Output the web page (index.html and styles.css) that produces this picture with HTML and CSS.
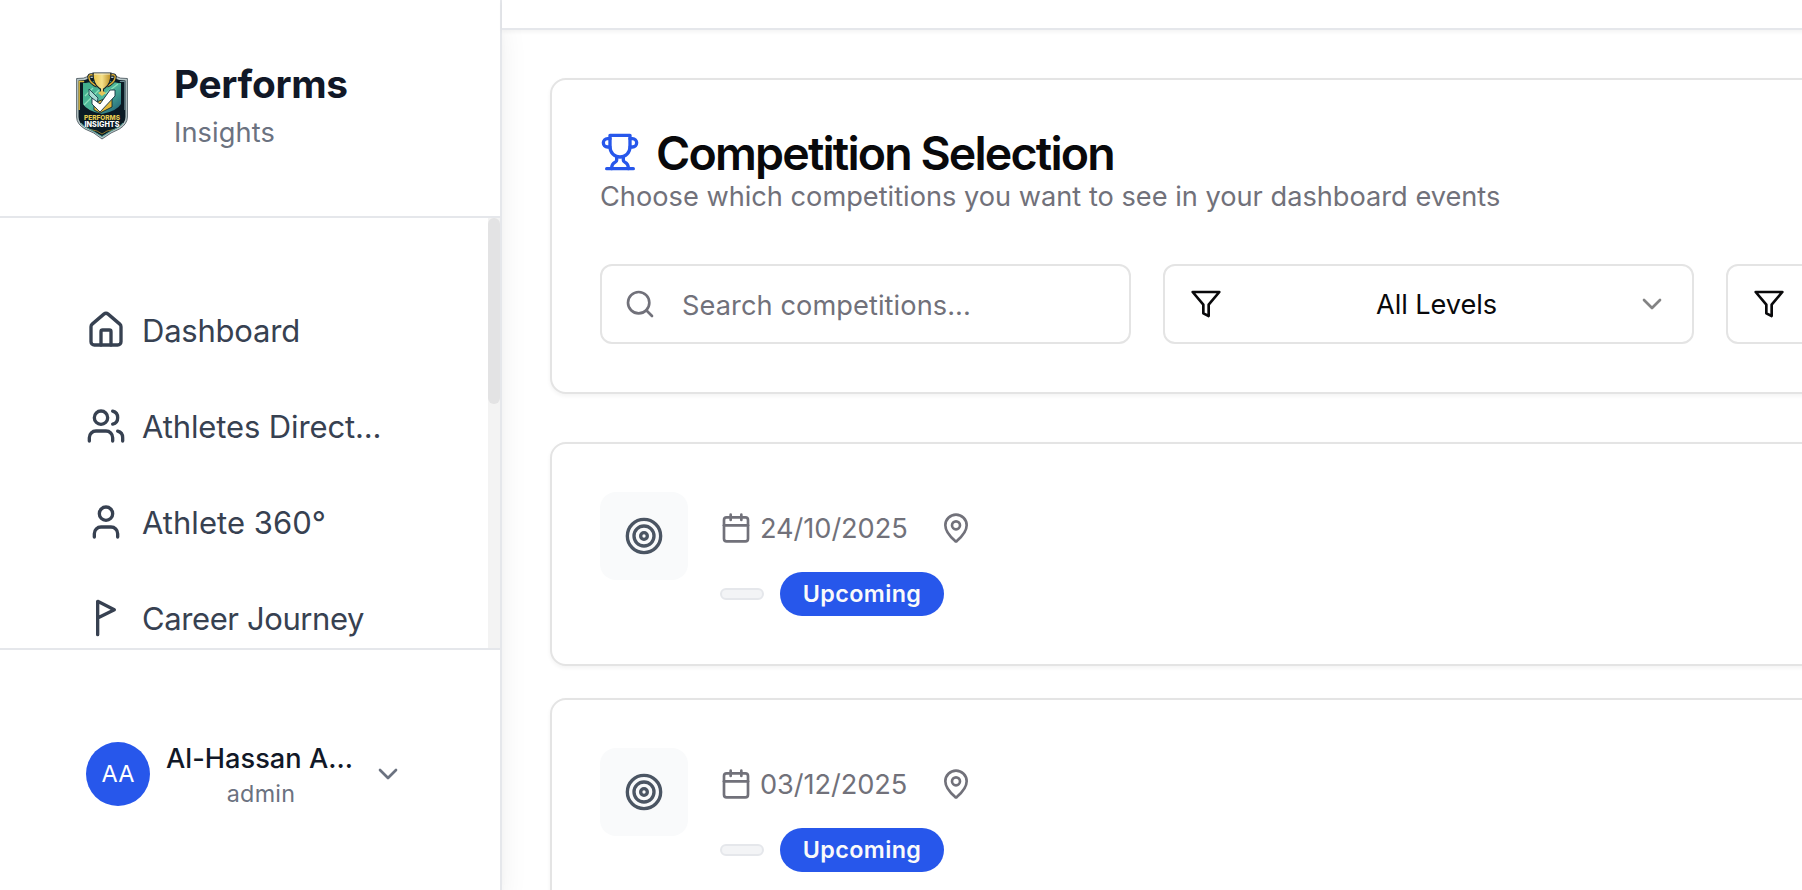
FILE: index.html
```html
<!DOCTYPE html>
<html lang="en">
<head>
<meta charset="utf-8">
<title>Performs Insights</title>
<link rel="stylesheet" href="styles.css">
</head>
<body>
<svg class="sprite" aria-hidden="true">
  <symbol id="i-target" viewBox="0 0 24 24"><circle cx="12" cy="12" r="10"/><circle cx="12" cy="12" r="6"/><circle cx="12" cy="12" r="2"/></symbol>
  <symbol id="i-calendar" viewBox="0 0 24 24"><path d="M8 2v4M16 2v4"/><rect x="3" y="4" width="18" height="18" rx="2"/><path d="M3 10h18"/></symbol>
  <symbol id="i-pin" viewBox="0 0 24 24"><path d="M20 10c0 4.993-5.539 10.193-7.399 11.799a1 1 0 0 1-1.202 0C9.539 20.193 4 14.993 4 10a8 8 0 0 1 16 0"/><circle cx="12" cy="10" r="3"/></symbol>
  <symbol id="i-filter" viewBox="0 0 24 24"><polygon points="22 3 2 3 10 12.46 10 19 14 21 14 12.46 22 3"/></symbol>
  <symbol id="i-chevron" viewBox="0 0 24 24"><path d="m6 9 6 6 6-6"/></symbol>
</svg>
<div class="app">
  <aside class="sidebar">
    <div class="brand">
      <svg class="brand-logo" viewBox="0 0 52 68">
        <defs>
          <linearGradient id="teal" x1="0" y1="0" x2="1" y2="1"><stop offset="0" stop-color="#3fae8a"/><stop offset=".5" stop-color="#4fb79a"/><stop offset="1" stop-color="#1d5876"/></linearGradient>
          <linearGradient id="gold" x1="0" y1="0" x2="1" y2="0"><stop offset="0" stop-color="#e9c64a"/><stop offset=".5" stop-color="#f5e08a"/><stop offset="1" stop-color="#b98a1d"/></linearGradient>
        </defs>
        <path d="M.6 6.5Q8 7 13 4h26q5 3 12.400 2.500V45q0 7-8 12-8 3-17.400 10Q18 60 9 57 .6 52 .6 45z" fill="#b9c8c9" stroke="#3c4a52" stroke-width=".8"/>
        <path d="M2.500 8.500q7 0 11-2.500h25q4 2.500 11 2.500V45q0 6-7 10.500-8 3-16.500 9-8.500-6-16.500-9-7-4.500-7-10.500z" fill="#0a1a24"/>
        <path d="M3.200 38V9.500h5" fill="none" stroke="#d9b943" stroke-width="1.400"/>
        <path d="M48.800 38V9.500h-5" fill="none" stroke="#6d8d94" stroke-width="1"/>
        <path d="M7 11q6 0 9-2h20q3 2 9 2v21q-4 7-19 10Q11 39 7 32z" fill="url(#teal)"/>
        <path d="m8 33 15-15M29 22l13-10M9 24l8-8" stroke="#8de0bb" stroke-width="1.300"/>
        <path d="M17 3q-5-1-4 3 1 5 8 8M35 3q5-1 4 3-1 5-8 8" fill="none" stroke="#0a1a24" stroke-width="3.200"/>
        <path d="M17 3q-5-1-4 3 1 5 8 8M35 3q5-1 4 3-1 5-8 8" fill="none" stroke="#d7ac35" stroke-width="1.400"/>
        <path d="M17 1h18q0 11-6 15l-1.500 1v4h-3v-4L23 16q-6-4-6-15z" fill="url(#gold)" stroke="#14222b" stroke-width="1.100"/>
        <path d="M18 2h16" stroke="#f6efcf" stroke-width="1"/>
        <path d="m22 21 4-2.500 4 2.500-4 3z" fill="#e5c75a"/>
        <path d="M18 31v7l6 3 12-6V24z" fill="#e2b83c" stroke="#0a1a24" stroke-width=".8"/>
        <path d="m13 17 9 9-1 5-8-8z" fill="#a8dcd2" stroke="#123040" stroke-width=".8"/>
        <path d="m16 26 8 6 10-14h5v6L24 40l-8-8z" fill="#fff" stroke="#123040" stroke-width=".9"/>
        <path d="m14 57.500 7 1.500 5 3 5-3 7-1.500" fill="none" stroke="#98812f" stroke-width=".9"/>
        <path d="M5 51q3 4 11 7.500l10 6 10-6q8-3.500 11-7.500" fill="none" stroke="#4f9a92" stroke-width="1"/>
        <text x="8" y="48.300" class="logo-text" fill="#e5ca50" font-size="6.800" textLength="36" lengthAdjust="spacingAndGlyphs">PERFORMS</text>
        <text x="8.500" y="55.300" class="logo-text" fill="#fff" font-size="7.200" textLength="35" lengthAdjust="spacingAndGlyphs">INSIGHTS</text>
      </svg>
      <div class="brand-copy">
        <div class="brand-name">Performs</div>
        <div class="brand-sub">Insights</div>
      </div>
    </div>
    <div class="nav-wrap">
      <nav class="nav">
        <a class="nav-item"><svg class="icon icon-lg" viewBox="0 0 24 24"><path d="M15 21v-8a1 1 0 0 0-1-1h-4a1 1 0 0 0-1 1v8"/><path d="M3 10a2 2 0 0 1 .709-1.528l7-5.999a2 2 0 0 1 2.582 0l7 5.999A2 2 0 0 1 21 10v9a2 2 0 0 1-2 2H5a2 2 0 0 1-2-2z"/></svg><span class="nav-label dashboard">Dashboard</span></a>
        <a class="nav-item"><svg class="icon icon-lg" viewBox="0 0 24 24"><path d="M16 21v-2a4 4 0 0 0-4-4H6a4 4 0 0 0-4 4v2"/><circle cx="9" cy="7" r="4"/><path d="M22 21v-2a4 4 0 0 0-3-3.870"/><path d="M16 3.130a4 4 0 0 1 0 7.750"/></svg><span class="nav-label directory">Athletes Direct...</span></a>
        <a class="nav-item"><svg class="icon icon-lg" viewBox="0 0 24 24"><path d="M19 21v-2a4 4 0 0 0-4-4H9a4 4 0 0 0-4 4v2"/><circle cx="12" cy="7" r="4"/></svg><span class="nav-label athlete">Athlete 360°</span></a>
        <a class="nav-item"><svg class="icon icon-lg" viewBox="0 0 24 24"><path d="M7 22V2l10 5-10 5"/></svg><span class="nav-label career">Career Journey</span></a>
      </nav>
      <div class="scrollbar"><div class="scroll-thumb"></div></div>
    </div>
    <div class="account">
      <div class="avatar">AA</div>
      <div class="account-copy">
        <div class="account-name">Al-Hassan A...</div>
        <div class="account-role">admin</div>
      </div>
      <svg class="icon icon-md account-chevron"><use href="#i-chevron"/></svg>
    </div>
  </aside>
  <div class="page">
    <header class="topbar"></header>
    <main class="content">
      <section class="card filters">
        <div class="title-row">
          <svg class="icon icon-lg trophy" viewBox="0 0 24 24"><path d="M6 9H4.500a2.500 2.500 0 0 1 0-5H6"/><path d="M18 9h1.500a2.500 2.500 0 0 0 0-5H18"/><path d="M4 22h16"/><path d="M10 14.660V17c0 .55-.47.98-.97 1.210C7.850 18.750 7 20.240 7 22"/><path d="M14 14.660V17c0 .55.47.98.97 1.210C16.150 18.750 17 20.240 17 22"/><path d="M18 2H6v7a6 6 0 0 0 12 0V2Z"/></svg>
          <h1 class="title">Competition Selection</h1>
        </div>
        <p class="subtitle">Choose which competitions you want to see in your dashboard events</p>
        <div class="controls">
          <div class="field search"><svg class="icon icon-md" viewBox="0 0 24 24"><circle cx="11" cy="11" r="8"/><path d="m21 21-4.300-4.300"/></svg><span class="placeholder">Search competitions...</span></div>
          <div class="field select"><svg class="icon icon-md filter-icon"><use href="#i-filter"/></svg><span class="select-value">All Levels</span><svg class="icon icon-md faded"><use href="#i-chevron"/></svg></div>
          <div class="field select"><svg class="icon icon-md filter-icon"><use href="#i-filter"/></svg></div>
        </div>
      </section>
      <div class="events">
        <article class="card event">
          <div class="tile"><svg class="icon icon-lg"><use href="#i-target"/></svg></div>
          <div class="event-info">
            <div class="meta"><span class="meta-item"><svg class="icon icon-md"><use href="#i-calendar"/></svg><span class="date">24/10/2025</span></span><svg class="icon icon-md"><use href="#i-pin"/></svg></div>
            <div class="badges"><span class="badge-empty"></span><span class="badge">Upcoming</span></div>
          </div>
        </article>
        <article class="card event">
          <div class="tile"><svg class="icon icon-lg"><use href="#i-target"/></svg></div>
          <div class="event-info">
            <div class="meta"><span class="meta-item"><svg class="icon icon-md"><use href="#i-calendar"/></svg><span class="date">03/12/2025</span></span><svg class="icon icon-md"><use href="#i-pin"/></svg></div>
            <div class="badges"><span class="badge-empty"></span><span class="badge">Upcoming</span></div>
          </div>
        </article>
      </div>
    </main>
  </div>
</div>
</body>
</html>
```
FILE: styles.css
```css
* { box-sizing: border-box; }
html, body { margin: 0; height: 100%; overflow: hidden; }
body { font-family: Inter, "Liberation Sans", sans-serif; background: #fff; color: #09090b; white-space: nowrap; }
.sprite { display: none; }
.app { display: flex; height: 890px; overflow: hidden; }

.icon { display: block; flex: none; fill: none; stroke: currentColor; stroke-width: 2; stroke-linecap: round; stroke-linejoin: round; }
.icon-md { width: 32px; height: 32px; }
.icon-lg { width: 40px; height: 40px; }

.sidebar { flex: none; width: 502px; display: flex; flex-direction: column; background: #fff; border-right: 2px solid #e5e7eb; position: relative; z-index: 1; box-shadow: 0 20px 30px -6px rgba(0,0,0,.1), 0 8px 12px -8px rgba(0,0,0,.1); }
.brand { height: 218px; flex: none; display: flex; align-items: flex-start; gap: 46px; padding: 56px 0 0 76px; border-bottom: 2px solid #e5e7eb; }
.brand-logo { width: 52px; height: 68px; margin-top: 16px; }
.logo-text { font-weight: 800; }
.brand-name { font-size: 38.8px; line-height: 56px; font-weight: 700; color: #111827; letter-spacing: -.3px; }
.brand-sub { padding-top: 1px; font-size: 27.2px; line-height: 40px; color: #6b7280; letter-spacing: .12px; }
.nav-wrap { flex: 1; min-height: 0; display: flex; justify-content: space-between; overflow: hidden; }
.nav { padding: 64px 0 0 86px; }
.nav-item { display: flex; align-items: center; gap: 16px; height: 96px; font-size: 31px; line-height: 48px; color: #374151; }
.nav-label { padding-top: 2px; }
.dashboard { letter-spacing: -.22px; }
.directory { letter-spacing: -.12px; }
.athlete { letter-spacing: .04px; }
.career { letter-spacing: -.4px; }
.scrollbar { width: 12px; background: #f3f3f3; }
.scroll-thumb { height: 186px; border-radius: 6px; background: #e3e3e4; }
.account { flex: none; height: 242px; display: flex; align-items: flex-start; padding: 92px 0 0 86px; border-top: 2px solid #e5e7eb; }
.avatar { width: 64px; height: 64px; border-radius: 50%; background: #2757eb; color: #fff; font-size: 23.5px; line-height: 64px; text-align: center; }
.account-copy { width: 190px; margin: -3px 0 0 16px; }
.account-name { font-size: 27.2px; line-height: 40px; font-weight: 500; color: #111827; letter-spacing: .02px; }
.account-role { font-size: 23.3px; line-height: 30px; color: #6b7280; text-align: center; letter-spacing: .25px; }
.account-chevron { margin: 16px 0 0 16px; color: #6b7280; }

.page { flex: none; width: 1853px; }
.topbar { height: 30px; border-bottom: 2px solid #e5e7eb; background: #fff; position: relative; z-index: 2; box-shadow: 0 2px 4px rgba(0,0,0,.05); }
.content { display: flex; flex-direction: column; gap: 48px; padding: 48px; }
.card { border: 2px solid #e4e4e4; border-radius: 16px; background: #fff; box-shadow: 0 2px 4px rgba(0,0,0,.05); }
.filters { height: 316px; padding: 48px; }
.title-row { display: flex; align-items: center; gap: 16px; height: 48px; }
.trophy { color: #2757eb; }
.title { margin: 0; padding-top: 1px; font-size: 46.5px; line-height: 48px; font-weight: 600; letter-spacing: -1.81px; word-spacing: -.5px; }
.subtitle { margin: 0; font-size: 27.2px; line-height: 41px; height: 40px; color: #71717a; letter-spacing: 0; }
.controls { display: grid; grid-template-columns: repeat(3, 1fr); gap: 32px; margin-top: 48px; }
.field { height: 80px; border: 2px solid #e4e4e4; border-radius: 12px; display: flex; align-items: center; padding: 0 24px; font-size: 27.2px; line-height: 40px; }
.search { gap: 26px; padding-left: 22px; color: #71717a; }
.placeholder { padding-top: 3px; letter-spacing: .08px; }
.select { justify-content: space-between; padding-left: 25px; }
.select-value { padding-top: 1px; letter-spacing: -.1px; }
.filter-icon { margin-right: 15px; }
.faded { opacity: .5; }
.events { display: flex; flex-direction: column; gap: 32px; }
.event { height: 224px; padding: 48px; display: flex; align-items: flex-start; gap: 32px; }
.tile { width: 88px; height: 88px; border-radius: 16px; background: #f9fafb; color: #4b5563; display: grid; place-items: center; }
.event-info { padding-top: 16px; display: flex; flex-direction: column; gap: 24px; }
.meta { display: flex; align-items: center; gap: 32px; height: 40px; color: #71717a; font-size: 27.2px; line-height: 38px; }
.meta-item { display: flex; align-items: center; gap: 8px; }
.date { width: 148px; padding-top: 2px; letter-spacing: -.07px; }
.badges { display: flex; align-items: center; gap: 16px; }
.badge-empty { width: 44px; height: 12px; border: 2px solid #e5e7eb; border-radius: 6px; background: #f3f4f6; }
.badge { width: 164px; height: 44px; border-radius: 22px; background: #2757eb; color: #fafafa; font-size: 23.3px; line-height: 44px; font-weight: 600; text-align: center; letter-spacing: .4px; }
```
